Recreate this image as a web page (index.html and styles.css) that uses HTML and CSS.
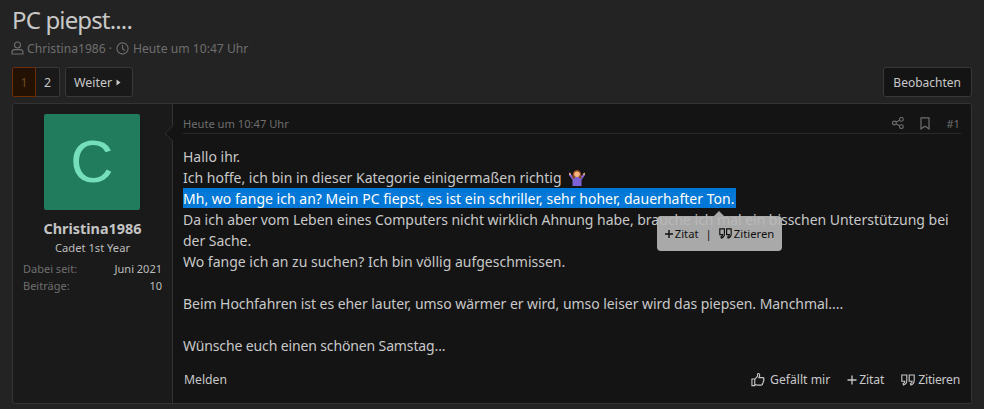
FILE: index.html
```html
<!DOCTYPE html>
<html lang="de">
<head>
<meta charset="utf-8">
<title>PC piepst....</title>
<link rel="stylesheet" href="styles.css">
</head>
<body>
<header class="head">
  <h1 class="title">PC piepst....</h1>
  <div class="meta">
    <svg class="ic-user" width="13" height="14" viewBox="0 0 13 14" fill="none" stroke="currentColor" stroke-width="1.1"><circle cx="6.500" cy="4" r="3"/><path d="M1 13v-1.600C1 9.800 2.300 8.600 3.900 8.600h5.200c1.600 0 2.900 1.200 2.900 2.800V13z"/></svg>
    <span>Christina1986</span><span class="dot">·</span>
    <svg class="ic-clock" width="13" height="13" viewBox="0 0 14 14" fill="none" stroke="currentColor" stroke-width="1.200"><circle cx="7" cy="7" r="6"/><path d="M7 3.200V7.300l2.600 1.800"/></svg>
    <span>Heute um 10:47 Uhr</span>
  </div>
</header>
<div class="toolbar">
  <div class="pages">
    <span class="page current">1</span><span class="page">2</span>
  </div>
  <span class="next">Weiter <svg width="5" height="7" viewBox="0 0 5 7"><path d="M0.500 0.500 4.500 3.500 0.500 6.500z" fill="currentColor"/></svg></span>
  <span class="watch">Beobachten</span>
</div>
<article class="post">
  <aside class="user">
    <div class="avatar">C</div>
    <div class="name">Christina1986</div>
    <div class="rank">Cadet 1st Year</div>
    <dl class="stats">
      <div class="stat"><dt>Dabei seit:</dt><dd>Juni 2021</dd></div>
      <div class="stat"><dt>Beiträge:</dt><dd>10</dd></div>
    </dl>
  </aside>
  <section class="main">
    <i class="arrow"></i>
    <div class="post-head">
      <span class="date">Heute um 10:47 Uhr</span>
      <span class="tools">
        <svg width="12" height="12" viewBox="0 0 12 12" fill="none" stroke="currentColor" stroke-width="1.100"><circle cx="2.400" cy="6" r="1.900"/><circle cx="9.400" cy="2.400" r="1.900"/><circle cx="9.400" cy="9.600" r="1.900"/><path d="M4.100 5.100 7.700 3.300M4.100 6.900l3.600 1.800"/></svg>
        <svg width="10" height="13" viewBox="0 0 10 13" fill="none" stroke="currentColor" stroke-width="1.200"><path d="M1 .8h8v11L5 9.200 1 11.800z"/></svg>
        <span class="num">#1</span>
      </span>
    </div>
    <div class="body">
      <div>Hallo ihr.</div>
      <div class="has-emoji">Ich hoffe, ich bin in dieser Kategorie einigermaßen richtig
        <svg class="emoji" width="16" height="16" viewBox="0 0 16 16"><path d="M0 5 1.300 4 5 7h6l3.700-3L16 5 12.500 10v6h-9v-6z" fill="#7d62d8"/><path d="M3.500 8.500C3 2 5.500 0 8 0s5 2 4.500 8.500H10V6H6v2.500z" fill="#8b4a1f"/><circle cx="8" cy="4.300" r="2.800" fill="#f6b57e"/><path d="M.3 3 1.500 5M15.700 3 14.500 5" stroke="#f6b57e" stroke-width="1.600"/></svg>
      </div>
      <div><span class="sel">Mh, wo fange ich an? Mein PC fiepst, es ist ein schriller, sehr hoher, dauerhafter Ton.</span></div>
      <div class="snug">Da ich aber vom Leben eines Computers nicht wirklich Ahnung habe, brauche ich mal ein bisschen Unterstützung bei der Sache.</div>
      <div>Wo fange ich an zu suchen? Ich bin völlig aufgeschmissen.</div>
      <div class="blank"></div>
      <div class="snug2">Beim Hochfahren ist es eher lauter, umso wärmer er wird, umso leiser wird das piepsen. Manchmal....</div>
      <div class="blank"></div>
      <div class="snug3">Wünsche euch einen schönen Samstag...</div>
    </div>
    <footer class="actions">
      <span>Melden</span>
      <span class="right">
        <span class="act like"><svg width="14" height="15" viewBox="0 0 15 15" fill="none" stroke="currentColor" stroke-width="1.200"><path d="M1 7h3v7H1zM4 7.500 7 4V1.800C7 .9 8.900.8 9.200 2.200c.2 1-.3 2.500-.7 3.300h4.200c1.500 0 1.500 2 .7 2.400.6.700.4 1.800-.4 2.100.3.800 0 1.600-.7 1.800.2 1.100-.4 1.700-1.500 1.700H7c-1.300 0-2-.7-3-.8"/></svg>Gefällt mir</span>
        <span class="act quote"><svg width="10" height="10" viewBox="0 0 10 10"><path d="M5 .5v9M.5 5h9" stroke="currentColor" stroke-width="1.300"/></svg>Zitat</span>
        <span class="act cite"><svg width="14" height="12" viewBox="0 0 14 12" fill="none" stroke="currentColor" stroke-width="1.100"><path d="M.8 1h5v5.300c0 2.500-1.300 4.200-3.300 4.700l-.5-1.200c1.200-.5 1.800-1.300 1.800-2.500H.8zM8.200 1h5v5.300c0 2.500-1.300 4.200-3.300 4.700l-.5-1.200c1.200-.5 1.800-1.300 1.800-2.500H8.200z"/></svg>Zitieren</span>
      </span>
    </footer>
  </section>
  <div class="tip">
    <i class="tip-arrow"></i>
    <span class="tip-item"><svg width="8" height="8" viewBox="0 0 9 9"><path d="M4.500 0v9M0 4.500h9" stroke="currentColor" stroke-width="1.600"/></svg>Zitat</span>
    <span class="tip-sep">|</span>
    <span class="tip-item"><svg width="13" height="11" viewBox="0 0 14 12" fill="none" stroke="currentColor" stroke-width="1.300"><path d="M.8 1h5v5.300c0 2.500-1.300 4.200-3.300 4.700l-.5-1.200c1.200-.5 1.800-1.300 1.800-2.500H.8zM8.200 1h5v5.300c0 2.500-1.300 4.200-3.300 4.700l-.5-1.200c1.200-.5 1.800-1.300 1.800-2.500H8.200z"/></svg>Zitieren</span>
  </div>
</article>
</body>
</html>
```
FILE: styles.css
```css
* { box-sizing: border-box; }
html, body { margin: 0; }
body {
  height: 409px;
  overflow: hidden;
  padding: 0 12px;
  background: #232323;
  color: #c8c8c8;
  font-family: "Noto Sans", "Open Sans", sans-serif;
  font-size: 13px;
}
svg { flex: none; }
.head { height: 67px; padding-top: 5px; }
.title {
  margin: 0;
  font-size: 24px;
  font-weight: 400;
  line-height: 30px;
  letter-spacing: -.85px;
  color: #c8c8c8;
}
.meta {
  display: flex;
  align-items: center;
  margin-top: 4px;
  height: 18px;
  font-size: 12.150px;
  color: #6e6e6e;
}
.ic-user { margin: 0 3px 0 -1px; }
.dot { margin: 0 3px 0 3px; }
.ic-clock { margin: 0 4px 0 1px; }
.toolbar { display: flex; align-items: stretch; height: 30px; }
.pages { display: flex; }
.page {
  width: 24px;
  display: flex;
  align-items: center;
  justify-content: center;
  background: #191919;
  border: 1px solid #383838;
  font-size: 12.400px;
}
.page:last-child { border-left: 0; border-radius: 0 2px 2px 0; }
.page.current {
  background: #231103;
  border-color: #6e2e06;
  color: #6e4a1e;
  border-radius: 2px 0 0 2px;
}
.next, .watch {
  display: flex;
  align-items: center;
  background: #191919;
  border: 1px solid #383838;
  border-radius: 3px;
  font-size: 12.400px;
}
.next { margin-left: 5px; padding: 0 11px 0 8px; gap: 4px; }
.watch { margin-left: auto; padding: 0 10px 0 9px; background: #141414; font-size: 12px; }
.post {
  position: relative;
  display: flex;
  margin-top: 6px;
  height: 301px;
  background: #1a1a1a;
  border: 1px solid #333;
  border-radius: 3px;
}
.user { width: 159px; padding: 10px 10px 0; text-align: center; }
.avatar {
  width: 96px;
  height: 96px;
  margin: 0 0 0 21px;
  background: #217b5d;
  border-radius: 2px;
  color: #74dfba;
  font: 60px/96px "Liberation Sans", sans-serif;
}
.name { margin-top: 9px; font-size: 14.400px; font-weight: 700; line-height: 20px; color: #c4c4c4; }
.rank { font-size: 11.200px; line-height: 17px; color: #bdbdbd; }
.stats { margin: 4px 0 0; }
.stat { display: flex; justify-content: space-between; font-size: 11px; line-height: 17px; }
.stat dt { color: #6e6e6e; }
.stat dd { margin: 0; color: #bdbdbd; }
.main {
  position: relative;
  flex: 1;
  display: flex;
  flex-direction: column;
  padding: 0 10px;
  background: #141414;
  border-left: 1px solid #333;
  border-radius: 0 3px 3px 0;
}
.arrow {
  position: absolute;
  left: -8px;
  top: 22px;
  width: 15px;
  height: 15px;
  transform: rotate(45deg) scale(.75);
  background: #141414;
  border-left: 1px solid #333;
  border-bottom: 1px solid #333;
}
.post-head {
  display: flex;
  justify-content: space-between;
  align-items: center;
  height: 31px;
  padding-top: 9px;
  border-bottom: 1px solid #2a2a2a;
  font-size: 11.150px;
  color: #6e6e6e;
}
.tools { display: flex; align-items: center; gap: 16px; }
.num { margin-right: 1px; }
.body { padding-top: 12px; font-size: 14px; line-height: 21px; color: #c8c8c8; }
.blank { height: 21px; }
.has-emoji { display: flex; align-items: center; gap: 7px; }
.sel {
  display: inline-block;
  height: 20px;
  padding-right: 2px;
  letter-spacing: .02px;
  background: #0078d7;
  color: #fff;
}
.snug { letter-spacing: -.03px; }
.snug2 { letter-spacing: -.05px; }
.snug3 { letter-spacing: -.13px; }
.actions {
  display: flex;
  justify-content: space-between;
  align-items: center;
  margin-top: auto;
  height: 48px;
  padding: 0 1px;
  font-size: 12.200px;
}
.right { display: flex; gap: 17px; }
.act { display: flex; align-items: center; }
.like { gap: 5px; }
.quote { gap: 2px; letter-spacing: -.15px; }
.cite { gap: 3px; letter-spacing: -.25px; }
.tip {
  position: absolute;
  left: 644px;
  top: 112px;
  width: 125px;
  height: 35px;
  display: flex;
  align-items: center;
  justify-content: center;
  gap: 7px;
  background: rgba(182, 182, 182, .92);
  border-radius: 4px;
  color: #111;
  font-size: 11.300px;
}
.tip-arrow {
  position: absolute;
  left: 57px;
  top: -5px;
  border: 5px solid transparent;
  border-top: 0;
  border-bottom-color: rgba(182, 182, 182, .92);
}
.tip-item { display: flex; align-items: center; gap: 2px; }
```
